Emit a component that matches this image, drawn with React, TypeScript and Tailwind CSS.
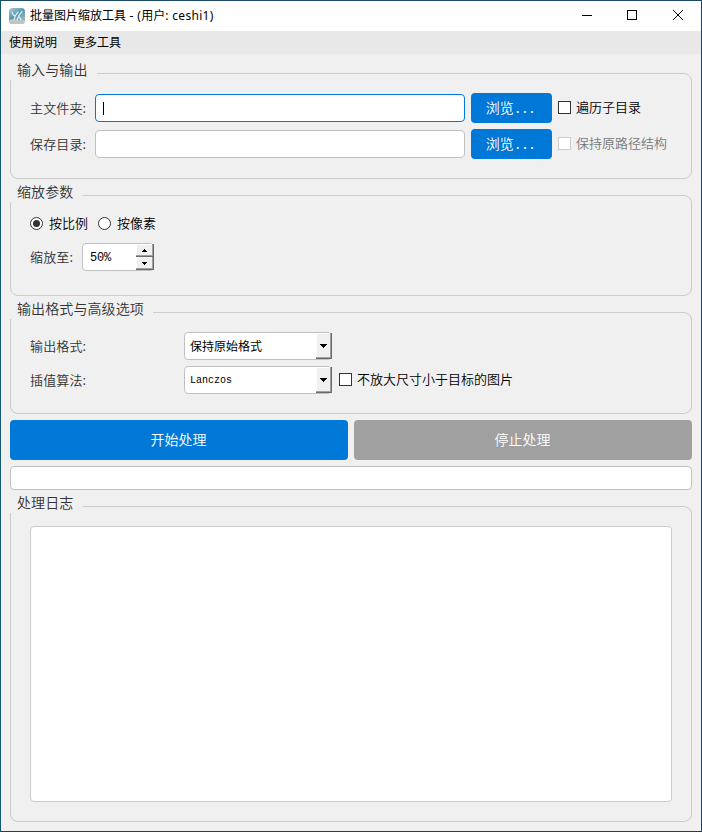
import React, { useState } from 'react';

const uiFont = 'font-["Noto_Sans_CJK_SC",sans-serif]';

interface GroupProps {
  title: string;
  titleWidth: string;
  className?: string;
  children: React.ReactNode;
}

const Group: React.FC<GroupProps> = ({ title, titleWidth, className = '', children }) => (
  <section className={`rounded-lg border border-[#cccccc] shrink-0 ${className}`}>
    {/* The title sits on the top border and hides its left end */}
    <h2
      className={`-mt-[14px] -ml-px h-5 pb-[2px] pl-[7px] bg-[#f0f0f0] text-[14px] leading-[18px] tracking-[0.1px] font-[350] text-[#333333] whitespace-nowrap ${titleWidth}`}
    >
      {title}
    </h2>
    {children}
  </section>
);

interface LabelProps {
  className?: string;
  children: React.ReactNode;
}

const Label: React.FC<LabelProps> = ({ className = '', children }) => (
  <span className={`text-[13px] leading-5 font-[350] text-[#333333] whitespace-nowrap ${className}`}>{children}</span>
);

interface CheckProps {
  label: string;
  disabled?: boolean;
  className?: string;
}

const Check: React.FC<CheckProps> = ({ label, disabled = false, className = '' }) => {
  const [checked, setChecked] = useState(false);

  return (
    <button
      type="button"
      disabled={disabled}
      onClick={() => setChecked(!checked)}
      className={`flex items-center gap-[5px] text-[13px] leading-5 whitespace-nowrap font-[350] ${
        disabled ? 'text-[#787878]' : 'text-black'
      } ${className}`}
    >
      <span className={`flex size-[13px] border bg-white ${disabled ? 'border-[#cccccc]' : 'border-[#333333]'}`}>
        {checked && <span className="m-auto size-[7px] bg-[#333333]" />}
      </span>
      <span className="-mt-[2px]">{label}</span>
    </button>
  );
};

interface RadioProps {
  label: string;
  checked: boolean;
  onSelect: () => void;
}

const Radio: React.FC<RadioProps> = ({ label, checked, onSelect }) => (
  <button type="button" onClick={onSelect} className="flex items-center gap-[6px] text-[13px] leading-5 font-[350] text-black">
    <span className="flex size-[13px] rounded-full border border-[#333333] bg-white">
      {checked && <span className="m-auto size-[7px] rounded-full bg-[#333333]" />}
    </span>
    <span className="-mt-px">{label}</span>
  </button>
);

// Raised button edge: light on the top left, two shades of grey on the bottom right
const raised = 'border-r border-b border-[#696969] bg-[#f0f0f0] shadow-[inset_-1px_-1px_0_#a0a0a0,inset_1px_1px_0_#ffffff]';

const Combo: React.FC<{ value: string; className?: string }> = ({ value, className = '' }) => (
  <div className="flex h-7 w-[148px] rounded border border-[#c0c0c0] bg-white text-black">
    <span className={`flex-1 pl-[5px] whitespace-nowrap ${className}`}>{value}</span>
    <span className={`flex h-[26px] -mr-px w-4 items-center justify-center ${raised}`}>
      <svg width="7" height="4" viewBox="0 0 7 4" shapeRendering="crispEdges">
        <path d="M0 0h7v1H6v1H5v1H4v1H3V3H2V2H1V1H0z" fill="#000" />
      </svg>
    </span>
  </div>
);

const BrowseButton: React.FC = () => (
  <button type="button" className="ml-1.5 h-[30px] w-[81px] rounded bg-[#0078d7] pb-[2px] text-[14px] font-[350] text-white">
    浏览<span className="tracking-[3.2px] pl-[2px] font-normal">...</span>
  </button>
);

const AppIcon: React.FC = () => (
  <svg width="16" height="16" viewBox="0 0 16 16">
    <defs>
      <linearGradient id="tile" x1="0" y1="0" x2="0.7" y2="1">
        <stop offset="0" stopColor="#b5cdd0" />
        <stop offset="0.5" stopColor="#5299b0" />
        <stop offset="1" stopColor="#a9bfc2" />
      </linearGradient>
    </defs>
    <rect width="16" height="16" rx="3.5" fill="url(#tile)" />
    <path d="M0 12q4-1.500 8 0t8 0v.5a3.500 3.500 0 0 1-3.500 3.500h-9A3.500 3.500 0 0 1 0 12.500z" fill="#c3c6be" />
    <path d="M3 4q.5 3 3 4.500M5 12q1-5 4-8M8 12q1.500-5 5-8.500M10.500 9l1.500 3" fill="none" stroke="#e4f0f2" strokeWidth="1.200" strokeLinecap="round" />
  </svg>
);

const App: React.FC = () => {
  const [mode, setMode] = useState<'ratio' | 'pixel'>('ratio');
  const [folder, setFolder] = useState('');
  const [target, setTarget] = useState('');

  return (
    <div
      className={`flex h-[832px] w-[702px] flex-col overflow-hidden border border-t-[#1b4a68] border-r-[#25406a] border-b-[#1b405c] border-l-[#175670] bg-[#f0f0f0] ${uiFont}`}
    >
      {/* Title bar */}
      <header className="flex h-[30px] shrink-0 items-center bg-white pl-2 text-[12px] text-black">
        <AppIcon />
        <h1 className="-mt-px ml-[5px] flex-1 whitespace-pre">
          批量图片缩放工具<span className='font-["Noto_Sans",sans-serif] tracking-[0.4px]'> - (</span>用户
          <span className='font-["Noto_Sans",sans-serif] tracking-[0.3px]'>: ceshi1)</span>
        </h1>
        <svg width="120" height="30" viewBox="0 0 120 30" fill="none" stroke="#000">
          <path d="M1 14.500h10M46.500 9.500h9v9h-9z" shapeRendering="crispEdges" />
          <path d="M92 9l10 10M102 9l-10 10" />
        </svg>
      </header>

      {/* Menu */}
      <nav className="flex h-[23px] shrink-0 items-center gap-4 bg-[#e8e8e8] pb-[2px] pl-2 text-[12px] text-black">
        <span>使用说明</span>
        <span>更多工具</span>
      </nav>

      <main className="flex flex-1 flex-col px-[9px]">
        <Group title="输入与输出" titleWidth="w-[87px]" className="mt-[19px] h-[106px]">
          <div className="mt-[13px] flex h-[30px] items-center pl-[19px]">
            <Label className="w-[65px] tracking-[0.15px]">主文件夹:</Label>
            <div className="flex h-7 w-[370px] items-center rounded border border-[#0078d7] bg-white pl-[7px]">
              {folder === '' && <span className="h-[13px] w-px bg-black" />}
              <input
                value={folder}
                onChange={(e) => setFolder(e.target.value)}
                className="min-w-0 flex-1 text-[13px] outline-none"
              />
            </div>
            <BrowseButton />
            <Check label="遍历子目录" className="ml-1.5 -mt-px" />
          </div>
          <div className="mt-1.5 flex h-[30px] items-center pl-[19px]">
            <Label className="w-[65px] tracking-[0.15px]">保存目录:</Label>
            <input
              value={target}
              onChange={(e) => setTarget(e.target.value)}
              className="h-7 w-[370px] rounded border border-[#c0c0c0] bg-white px-[7px] text-[13px] outline-none"
            />
            <BrowseButton />
            <Check label="保持原路径结构" disabled className="ml-1.5 -mt-px" />
          </div>
        </Group>

        <Group title="缩放参数" titleWidth="w-[73px]" className="mt-4 h-[101px]">
          <div className="mt-[11px] flex h-5 items-center gap-[10px] pl-[19px]">
            <Radio label="按比例" checked={mode === 'ratio'} onSelect={() => setMode('ratio')} />
            <Radio label="按像素" checked={mode === 'pixel'} onSelect={() => setMode('pixel')} />
          </div>
          <div className="mt-[10px] flex h-7 items-center pl-[19px]">
            <Label className="w-[52px] tracking-[0.15px]">缩放至:</Label>
            <div className="flex h-7 w-[72px] rounded border border-[#c0c0c0] bg-white">
              <span className='flex-1 pl-[7px] font-["Liberation_Mono",monospace] text-[12px] leading-[29px] tracking-[-0.2px] text-black'>50%</span>
              <span className="-mr-px flex h-[26px] w-[18px] flex-col">
                <span className={`flex h-[13px] items-center justify-center ${raised}`}>
                  <svg width="5" height="3" viewBox="0 0 5 3" shapeRendering="crispEdges">
                    <path d="M2 0h1v1h1v1h1v1H0V2h1V1h1z" fill="#000" />
                  </svg>
                </span>
                <span className={`flex h-[13px] items-center justify-center ${raised}`}>
                  <svg width="5" height="3" viewBox="0 0 5 3" shapeRendering="crispEdges">
                    <path d="M0 0h5v1H4v1H3v1H2V2H1V1H0z" fill="#000" />
                  </svg>
                </span>
              </span>
            </div>
          </div>
        </Group>

        <Group title="输出格式与高级选项" titleWidth="w-[143px]" className="mt-4 h-[102px]">
          <div className="mt-[13px] flex h-7 items-center pl-[19px]">
            <Label className="w-[154px] tracking-[0.15px]">输出格式:</Label>
            <Combo value="保持原始格式" className="text-[12px] leading-[26px]" />
          </div>
          <div className="mt-1.5 flex h-7 items-center pl-[19px]">
            <Label className="w-[154px] tracking-[0.15px]">插值算法:</Label>
            <Combo value="Lanczos" className='font-["Liberation_Mono",monospace] text-[10px] leading-[28px]' />
            <Check label="不放大尺寸小于目标的图片" className="ml-[7px] -mt-px" />
          </div>
        </Group>

        <div className="mt-1.5 flex h-10 shrink-0 gap-1.5 text-[14px] font-[350] text-white">
          <button type="button" className="flex-1 rounded bg-[#0078d7] pr-px pb-[2px]">开始处理</button>
          <button type="button" disabled className="flex-1 rounded bg-[#a0a0a0] pr-px pb-[2px]">停止处理</button>
        </div>

        {/* Progress */}
        <div className="mt-1.5 h-6 shrink-0 rounded border border-[#c0c0c0] bg-white" />

        <Group title="处理日志" titleWidth="w-[73px]" className="mt-4 flex h-[316px] flex-col">
          <textarea readOnly className="mt-[13px] mr-[19px] mb-[19px] ml-[19px] flex-1 resize-none rounded border border-[#cccccc] bg-white outline-none" />
        </Group>
      </main>
    </div>
  );
};

export default App;
